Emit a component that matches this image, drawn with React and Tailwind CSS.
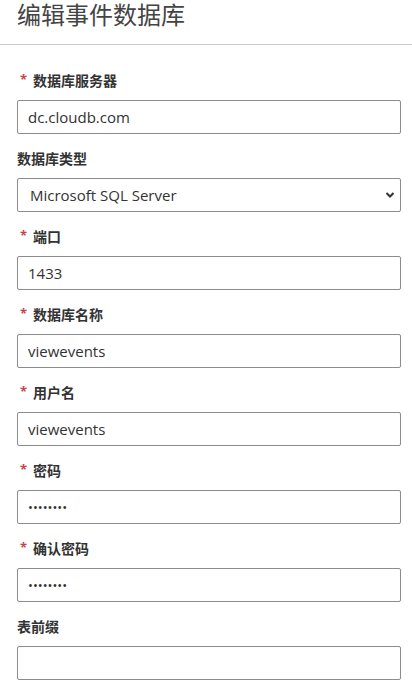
import React from 'react';

const FIELDS = [
  { label: '数据库服务器', required: true, value: 'dc.cloudb.com' },
  { label: '数据库类型', required: false, select: true, value: 'Microsoft SQL Server' },
  { label: '端口', required: true, value: '1433' },
  { label: '数据库名称', required: true, value: 'viewevents' },
  { label: '用户名', required: true, value: 'viewevents' },
  { label: '密码', required: true, value: 'password', password: true },
  { label: '确认密码', required: true, value: 'password', password: true },
  { label: '表前缀', required: false, value: '' },
];

const font = { fontFamily: '"Open Sans", "Noto Sans CJK SC", sans-serif' };

const Field = ({ field, first }) => (
  <div className={first ? 'mt-[24px]' : 'mt-[13px]'}>
    <label className="h-[22px] flex items-center text-[14px] font-bold text-[#333]">
      {field.required && <span className="text-[#c7454a] w-[16px] pl-[3px] font-bold text-[13px]">*</span>}
      {field.label}
    </label>
    {field.select ? (
      <div className="relative mt-[9px]">
        <select
          defaultValue={field.value}
          className="appearance-none w-full h-[34px] border border-[#8c8c8c] rounded-[2px] pl-[12px] text-[15px] text-[#333] bg-white outline-none"
        >
          <option>Microsoft SQL Server</option>
          <option>MySQL</option>
          <option>PostgreSQL</option>
        </select>
        <svg className="absolute right-[6px] top-[13px] pointer-events-none" width="10" height="8" viewBox="0 0 10 8">
          <path d="M1.5 2 L5 5.5 L8.5 2" fill="none" stroke="#333" strokeWidth="2" />
        </svg>
      </div>
    ) : (
      <input
        type={field.password ? 'password' : 'text'}
        defaultValue={field.value}
        className={`mt-[9px] block w-full h-[34px] border border-[#8c8c8c] rounded-[2px] px-[10px] text-[#333] bg-white outline-none ${
          field.password ? 'text-[13px]' : 'text-[15px]'
        }`}
      />
    )}
  </div>
);

const App = () => {
  return (
    <div className="w-[412px] h-[684px] bg-white overflow-hidden" style={font}>
      <div className="h-[45px] border-b border-[#cccccc]">
        <h1 className="px-[17px] pt-[1px] text-[24px] leading-[28px] font-normal text-[#444]">编辑事件数据库</h1>
      </div>
      <form className="pl-[17px] pr-[11px]">
        {FIELDS.map((f, i) => (
          <Field key={f.label} field={f} first={i === 0} />
        ))}
      </form>
    </div>
  );
};

export default App;
